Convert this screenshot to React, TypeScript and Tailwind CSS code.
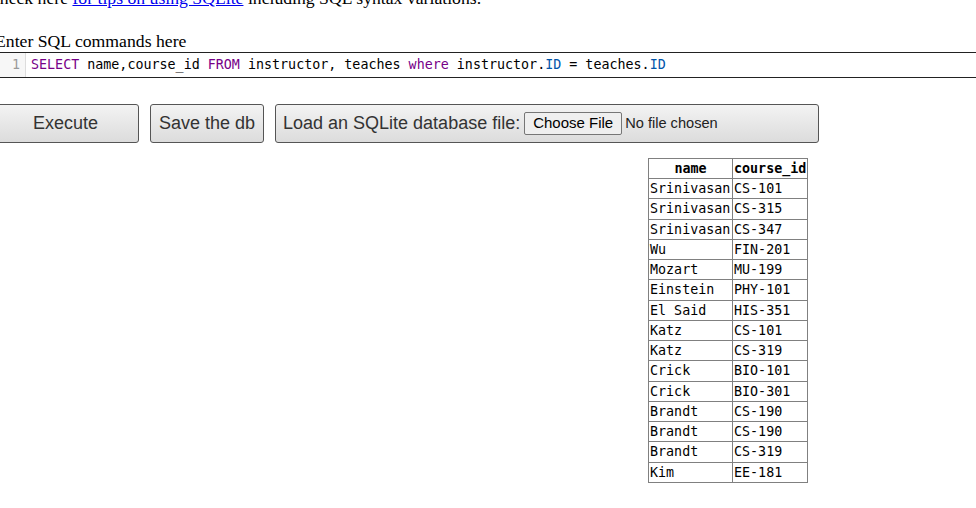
import React from "react";

const rows: [string, string][] = [
  ["Srinivasan", "CS-101"],
  ["Srinivasan", "CS-315"],
  ["Srinivasan", "CS-347"],
  ["Wu", "FIN-201"],
  ["Mozart", "MU-199"],
  ["Einstein", "PHY-101"],
  ["El Said", "HIS-351"],
  ["Katz", "CS-101"],
  ["Katz", "CS-319"],
  ["Crick", "BIO-101"],
  ["Crick", "BIO-301"],
  ["Brandt", "CS-190"],
  ["Brandt", "CS-190"],
  ["Brandt", "CS-319"],
  ["Kim", "EE-181"],
];

const serif = "font-['Liberation_Serif','Times_New_Roman',serif]";
const sans = "font-['Liberation_Sans',Arial,sans-serif]";
const mono = "font-['DejaVu_Sans_Mono',monospace]";

export default function App() {
  return (
    <div className="w-[976px] h-[508px] overflow-hidden bg-white text-black">
      <div className="ml-[-8px] mt-[-12px] w-[992px]">
        <p className={`${serif} text-[17.7px] leading-[20px] whitespace-nowrap ml-[-4px]`}>
          Check here{" "}
          <a className="text-[#0000ee] underline" href="#">
            for tips on using SQLite
          </a>{" "}
          including SQL syntax variations.
        </p>
        <p className={`${serif} text-[17.7px] leading-[20px] mt-[23px] ml-[3px] whitespace-nowrap`}>
          Enter SQL commands here
        </p>
        <div className="mt-[1px] ml-[8px] h-[26px] border-y border-[#222] flex bg-white">
          <div className="w-[26px] shrink-0 bg-[#f7f7f7] border-r border-[#ddd] flex items-center justify-end pr-[5px]">
            <span className={`${mono} text-[13.35px] text-[#999]`}>1</span>
          </div>
          <div className={`${mono} text-[13.35px] pl-[5px] flex items-center whitespace-pre`}>
            <span className="text-[#770088]">SELECT</span>
            <span> name,course_id </span>
            <span className="text-[#770088]">FROM</span>
            <span> instructor, teaches </span>
            <span className="text-[#770088]">where</span>
            <span> instructor.</span>
            <span className="text-[#0055aa]">ID</span>
            <span> = teaches.</span>
            <span className="text-[#0055aa]">ID</span>
          </div>
        </div>
        <div className={`${sans} mt-[26px] flex gap-[11px] items-stretch`}>
          <button className="w-[147px] h-[39px] rounded-[3px] border border-[#555] bg-gradient-to-b from-[#f3f3f3] to-[#dcdcdc] text-[18px] text-[#333]">
            Execute
          </button>
          <button className="w-[114px] h-[39px] rounded-[3px] border border-[#555] bg-gradient-to-b from-[#f3f3f3] to-[#dcdcdc] text-[18px] text-[#333]">
            Save the db
          </button>
          <div className="w-[544px] h-[39px] rounded-[3px] border border-[#555] bg-gradient-to-b from-[#f3f3f3] to-[#dcdcdc] flex items-center pl-[7px] text-[#333]">
            <span className="text-[18px]">Load an SQLite database file:</span>
            <span className="ml-[4px] h-[23px] w-[98px] flex items-center justify-center border border-[#767676] rounded-[2px] bg-[#efefef] text-[15px] text-black">
              Choose File
            </span>
            <span className="ml-[3px] text-[14.6px] text-[#222]">No file chosen</span>
          </div>
        </div>
        <div className="mt-[15px] ml-[656px]">
          <table className={`${mono} text-[13.35px] border-collapse table-fixed w-[159px]`}>
            <colgroup>
              <col className="w-[84px]" />
              <col className="w-[75px]" />
            </colgroup>
            <thead>
              <tr>
                <th className="border border-[#808080] px-[1px] py-0 leading-[19px] font-bold text-center">name</th>
                <th className="border border-[#808080] px-[1px] py-0 leading-[19px] font-bold text-left whitespace-nowrap">course_id</th>
              </tr>
            </thead>
            <tbody>
              {rows.map(([n, c], i) => (
                <tr key={i}>
                  <td className="border border-[#808080] px-[1px] py-0 leading-[19.27px] whitespace-nowrap">{n}</td>
                  <td className="border border-[#808080] px-[1px] py-0 leading-[19.27px] whitespace-nowrap">{c}</td>
                </tr>
              ))}
            </tbody>
          </table>
        </div>
      </div>
    </div>
  );
}
